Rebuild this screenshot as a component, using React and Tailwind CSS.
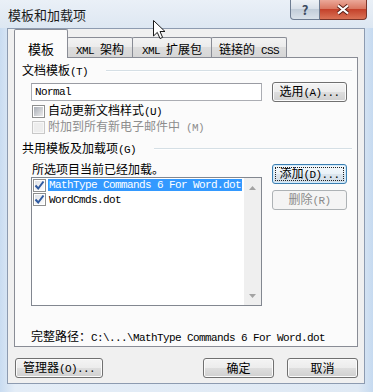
import React from "react";

const L = ({ children, className = "" }) => (
  <span className={"whitespace-pre font-['Liberation_Mono',monospace] text-[11px] tracking-[-0.6px] " + className}>{children}</span>
);

function Check({ checked, disabled, unchecked }) {
  return (
    <div
      className={
        "w-[13px] h-[13px] shrink-0 border flex items-center justify-center " +
        (disabled ? "border-[#c8c8c8] bg-[#f7f7f7]" : "border-[#8e8f8f] bg-white")
      }
    >
      <div
        className={
          "w-[9px] h-[9px] flex items-center justify-center " +
          (disabled
            ? "bg-[#ededed]"
            : checked
            ? "bg-[linear-gradient(135deg,#dfe3ea,#fbfbfb)]"
            : "bg-[linear-gradient(135deg,#a9aeb6,#ebebec)]")
        }
      >
        {checked && (
          <svg width="11" height="11" viewBox="0 0 11 11" className="-m-[1px]">
            <path d="M1.5 5.5 L4.2 8.5 L9.5 1.5" fill="none" stroke="#2f5aa0" strokeWidth="2" />
          </svg>
        )}
      </div>
    </div>
  );
}

function Btn({ className = "", children, focused, disabled }) {
  const base =
    "h-[20px] shrink-0 flex items-center justify-center rounded-[3px] border text-[12px] leading-[14px] ";
  if (disabled)
    return <div className={base + "border-[#adb2b5] bg-[#f4f4f4] text-[#8a8a8a] " + className}><span>{children}</span></div>;
  if (focused)
    return (
      <div
        className={
          base +
          "border-[#3c7fb1] bg-[linear-gradient(#f4f9fc,#eaf2f8_50%,#dce6ee_50%,#d3dee8)] shadow-[inset_0_0_0_1px_#cfeafc] p-[2px] " +
          className
        }
      >
        <div className="flex-1 self-stretch flex items-center justify-center border border-dotted border-[#222]">
          <span>{children}</span>
        </div>
      </div>
    );
  return (
    <div
      className={
        base +
        "border-[#707070] bg-[linear-gradient(#f4f4f4,#ececec_50%,#dedede_50%,#d0d0d0)] shadow-[inset_0_0_0_1px_#fbfbfb] " +
        className
      }
    >
      <span>{children}</span>
    </div>
  );
}

function GroupLabel({ children }) {
  return (
    <div className="ml-[7px] flex items-center h-[14px]">
      <span className="whitespace-nowrap">{children}</span>
      <div className="ml-[18px] mr-[5px] flex-1 h-[2px] border-t border-b border-t-[#d5dfe5] border-b-white" />
    </div>
  );
}

function Arrow({ up }) {
  return (
    <div className="h-[17px] flex items-center justify-center">
      <svg width="7" height="4" viewBox="0 0 7 4">
        {up ? <path d="M0 4 L3.5 0 L7 4 Z" fill="#a3a3a3" /> : <path d="M0 0 L3.5 4 L7 0 Z" fill="#a3a3a3" />}
      </svg>
    </div>
  );
}

const tabCls =
  "-ml-px h-[20px] border border-b-0 border-[#898c95] rounded-t-[2px] bg-[linear-gradient(#f3f3f3,#ebebeb_50%,#dddddd_50%,#d6d6d6)] flex justify-center pt-[4px] whitespace-nowrap";

export default function App() {
  return (
    <div className="relative w-[373px] h-[392px] overflow-hidden bg-[linear-gradient(90deg,#c9dcf1,#e4edf7_4%,#dfe9f4_96%,#c6daf0)] font-['Noto_Sans_CJK_SC','Noto_Sans',sans-serif] text-[12px] leading-[14px] text-black flex flex-col">
      {/* title bar */}
      <div className="h-[28px] shrink-0 flex items-start bg-[linear-gradient(#eaf0f7,#dde7f2)]">
        <div className="ml-[8px] mt-[7px] text-[13px] leading-[16px] text-[#1a1a1a]">模板和加载项</div>
        <div className="ml-auto mr-[6px] flex">
          <div className="w-[30px] h-[20px] rounded-bl-[4px] border border-t-0 border-[#6e7d92] bg-[linear-gradient(#eef2f6,#d7dfe8_50%,#c2cdd9_50%,#dae2ea)] flex items-center justify-center text-[13px] font-bold text-[#3c4b60]">
            ?
          </div>
          <div className="w-[47px] h-[20px] rounded-br-[4px] border border-t-0 border-l-0 border-[#7a3429] bg-[linear-gradient(#eba899,#d8735c_50%,#c4422b_50%,#da7256)] flex items-center justify-center">
            <svg width="14" height="11" viewBox="0 0 14 11">
              <path d="M2 1.5 L12 9.5 M12 1.5 L2 9.5" stroke="#5a2018" strokeWidth="4" />
              <path d="M2 1.5 L12 9.5 M12 1.5 L2 9.5" stroke="#ffffff" strokeWidth="2.2" />
            </svg>
          </div>
        </div>
      </div>

      {/* client */}
      <div className="ml-[7px] w-[358px] h-[356px] shrink-0 border border-[#8d9bb0] bg-[#f0f0f0] flex flex-col px-[6px]">
        {/* tabs */}
        <div className="h-[28px] shrink-0 flex items-end">
          <div className="relative z-10 -mb-px w-[54px] h-[29px] bg-[#fbfbfb] border border-b-0 border-[#898c95] rounded-t-[2px] flex justify-center pt-[11px] text-[13px] leading-[15px]">
            模板
          </div>
          <div className={tabCls + " w-[66px]"}>
            <span>
              <L>XML </L>架构
            </span>
          </div>
          <div className={tabCls + " w-[80px]"}>
            <span>
              <L>XML </L>扩展包
            </span>
          </div>
          <div className={tabCls + " w-[76px]"}>
            <span>
              链接的<L> CSS</L>
            </span>
          </div>
        </div>

        {/* panel */}
        <div className="h-[290px] shrink-0 border border-[#898c95] bg-[#fbfbfb] flex flex-col pt-[6px]">
          <GroupLabel>
            文档模板<L>(T)</L>
          </GroupLabel>

          <div className="mt-[4px] ml-[16px] h-[20px] flex items-center">
            <div className="w-[231px] h-[18px] border border-[#abadb3] border-t-[#9a9ca3] bg-white flex items-center pl-[3px]">
              <L>Normal</L>
            </div>
            <Btn className="ml-[10px] w-[75px]">
              选用<L>(A)...</L>
            </Btn>
          </div>

          <div className="mt-[1px] ml-[17px] h-[16px] flex items-center gap-[3px]">
            <Check unchecked />
            <span>
              自动更新文档样式<L>(U)</L>
            </span>
          </div>
          <div className="ml-[17px] h-[16px] flex items-center gap-[3px] text-[#8d8d8d]">
            <Check disabled />
            <span>
              附加到所有新电子邮件中<L> (M)</L>
            </span>
          </div>

          <div className="mt-[7px]">
            <GroupLabel>
              共用模板及加载项<L>(G)</L>
            </GroupLabel>
          </div>

          <div className="mt-[6px] ml-[16px] flex">
            <div className="w-[231px] flex flex-col">
              <div className="pl-[1px] h-[14px]">所选项目当前已经加载。</div>
              <div className="mt-[1px] h-[129px] border border-[#828790] bg-white flex">
                <div className="flex-1 flex flex-col pl-[1px]">
                  <div className="h-[14px] flex items-center gap-[2px]">
                    <Check checked />
                    <span className="bg-[#3399ff] text-white px-[1px] h-[12px] flex items-center">
                      <L>MathType Commands 6 For Word.dot</L>
                    </span>
                  </div>
                  <div className="h-[14px] flex items-center gap-[2px]">
                    <Check checked />
                    <span className="px-[1px]">
                      <L>WordCmds.dot</L>
                    </span>
                  </div>
                </div>
                <div className="w-[17px] bg-[#efefef] flex flex-col justify-between py-[1px]">
                  <Arrow up />
                  <Arrow />
                </div>
              </div>
            </div>
            <div className="ml-[10px] w-[75px] pt-[2px] flex flex-col">
              <Btn focused className="w-[75px]">
                添加<L>(D)...</L>
              </Btn>
              <Btn disabled className="mt-[6px] w-[75px]">
                删除<L>(R)</L>
              </Btn>
            </div>
          </div>

          <div className="mt-[23px] ml-[16px] h-[14px] whitespace-nowrap">
            完整路径：<L>C:\...\MathType Commands 6 For Word.dot</L>
          </div>
        </div>

        {/* bottom buttons */}
        <div className="mt-[11px] flex">
          <Btn className="w-[88px] ml-[1px]">
            管理器<L>(O)...</L>
          </Btn>
          <Btn className="ml-auto w-[71px]">确定</Btn>
          <Btn className="ml-[13px] w-[71px]">取消</Btn>
        </div>
      </div>

      {/* mouse cursor */}
      <svg className="absolute left-[153px] top-[20px]" width="14" height="20" viewBox="0 0 14 20">
        <path
          d="M0.5 0.5 L0.5 16 L4.3 12.4 L7 18.5 L9.6 17.4 L7 11.5 L12 11.5 Z"
          fill="#ffffff"
          stroke="#1a1a1a"
          strokeWidth="1"
        />
      </svg>
    </div>
  );
}
